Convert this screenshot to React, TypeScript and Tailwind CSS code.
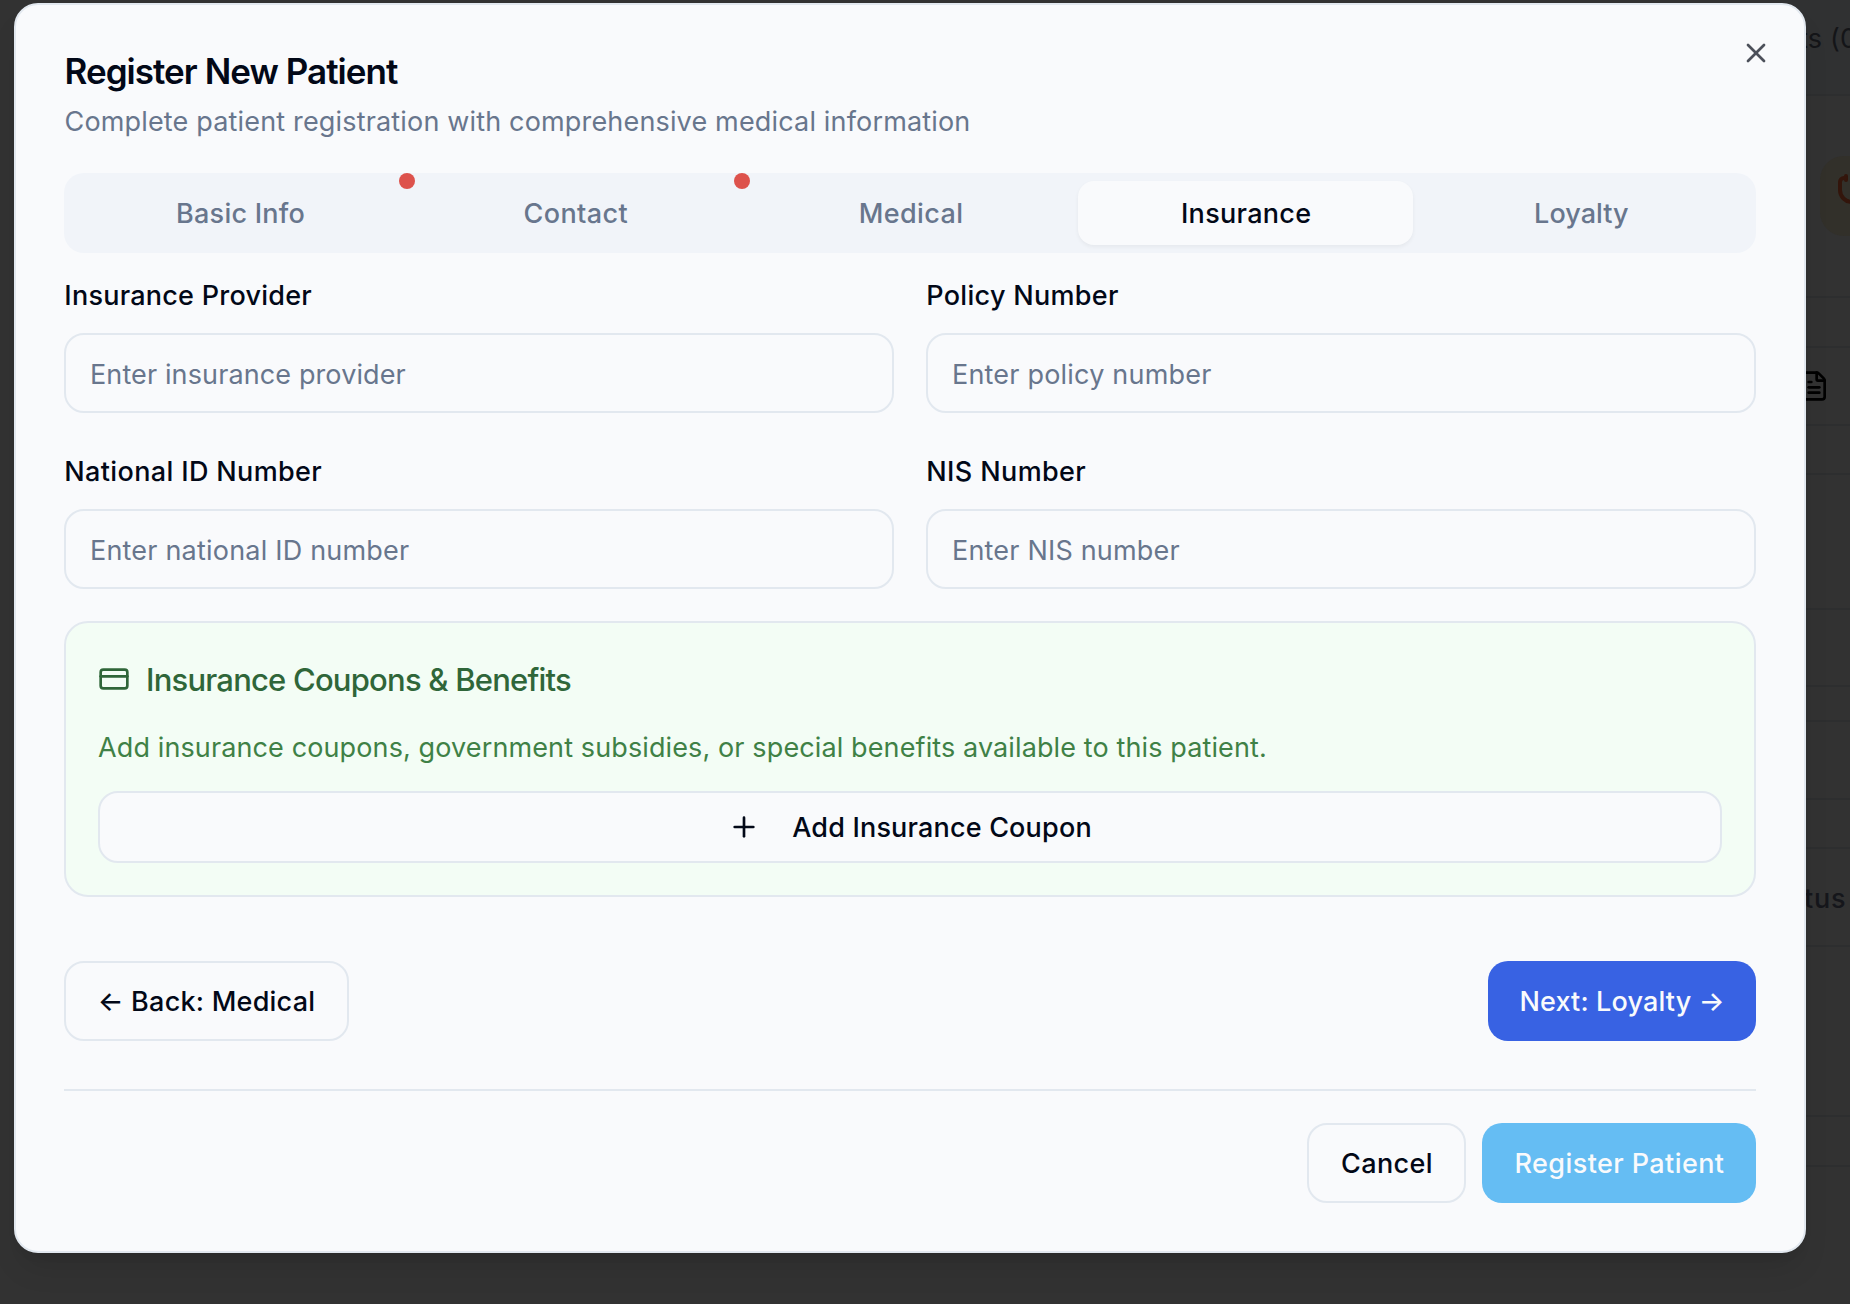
import React from 'react';
import { CreditCard, FileText, Plus, Stethoscope, X } from 'lucide-react';

const tabs = [
  { name: 'Basic Info', required: true, tracking: 'tracking-[0.244px]' },
  { name: 'Contact', required: true, tracking: 'tracking-[0.4px]' },
  { name: 'Medical', required: false, tracking: 'tracking-[0.388px]' },
  { name: 'Insurance', required: false, active: true, tracking: 'tracking-[0.305px]' },
  { name: 'Loyalty', required: false, tracking: 'tracking-[0.051px]' },
];

const fields = [
  { label: 'Insurance Provider', hint: 'Enter insurance provider', lt: 'tracking-[0.245px]', ht: 'tracking-[0.118px]' },
  { label: 'Policy Number', hint: 'Enter policy number', lt: 'tracking-[0.304px]', ht: 'tracking-[0.202px]' },
  { label: 'National ID Number', hint: 'Enter national ID number', lt: 'tracking-[0.361px]', ht: 'tracking-[0.202px]' },
  { label: 'NIS Number', hint: 'Enter NIS number', lt: 'tracking-[0.376px]', ht: 'tracking-[0.193px]' },
];

/* Dimmed page that shows past the right edge of the dialog */
function Backdrop() {
  const line = 'shrink-0 border-b-2 border-[#2d2e2f]';
  return (
    <div className="ml-[1780px] flex h-[1304px] w-[70px] flex-col overflow-hidden">
      <div className={`${line} flex h-[96px] items-start bg-[#303132] pt-[19px] pl-[19px]`}>
        <span className="text-[27px] leading-10 tracking-[0.2px] whitespace-nowrap text-[#141518]">ts (0</span>
      </div>
      <div className={`${line} flex h-[202px] items-start pt-[60px] pl-[40px]`}>
        <div className="flex size-20 shrink-0 items-center justify-center rounded-[24px] bg-[#32302a]">
          <Stethoscope className="size-12 text-[#33150b]" />
        </div>
      </div>
      <div className={`${line} h-[50px]`} />
      <div className={`${line} flex h-[78px] items-center pl-[18px]`}>
        <FileText className="size-8 text-black" />
      </div>
      <div className={`${line} h-[49px]`} />
      <div className={`${line} h-[135px]`} />
      <div className={`${line} h-[77px]`} />
      <div className={`${line} h-[35px]`} />
      <div className={`${line} h-[78px]`} />
      <div className={`${line} h-[49px]`} />
      <div className={`${line} flex h-[98px] items-start pt-[30px] pl-[24px]`}>
        <span className="text-[27px] leading-10 font-medium tracking-[0.8px] text-[#15161b]">tus</span>
      </div>
      <div className={`${line} h-[170px]`} />
      <div className={`${line} h-[50px]`} />
    </div>
  );
}

function Button({ className, icon, children }: { className: string; icon?: React.ReactNode; children: React.ReactNode }) {
  return (
    <button className={`flex items-center justify-center rounded-[20px] font-medium whitespace-nowrap ${className}`}>
      {icon}
      <span className="pt-0.5">{children}</span>
    </button>
  );
}

export default function App() {
  return (
    <div className="relative h-[1304px] w-[1850px] overflow-hidden bg-[#323232] font-['Inter',sans-serif] text-[27px] leading-10 text-[#020817]">
      <Backdrop />

      <div className="absolute top-[3px] left-[14px] flex h-[1250px] w-[1792px] flex-col rounded-[24px] border-2 border-[#e2e8ef] bg-[#f9fafc] p-12 shadow-[0_20px_30px_-6px_rgba(0,0,0,0.1),0_8px_12px_-8px_rgba(0,0,0,0.1)]">
        <button className="absolute top-8 right-8 text-[#4c505a]">
          <X className="size-8" />
        </button>

        <h2 className="pl-[0.5px] text-[35px] leading-9 font-semibold tracking-[-0.959px]">Register New Patient</h2>
        <p className="mt-[13px] pl-[0.5px] tracking-[0.165px] text-[#68768d]">
          Complete patient registration with comprehensive medical information
        </p>

        <div className="mt-[31px] grid h-20 grid-cols-5 rounded-[20px] bg-[#f1f4f9] p-2 font-medium text-[#68768d]">
          {tabs.map((t) => (
            <div
              key={t.name}
              className={`relative flex items-center justify-center rounded-[16px] pt-0.5 pl-0.5 ${t.tracking} ${
                t.active ? 'bg-[#f9fafc] text-[#020817] shadow-[0_2px_4px_rgba(0,0,0,0.05)]' : ''
              }`}
            >
              {t.name}
              {t.required && <span className="absolute -top-2 -right-2 size-4 rounded-full bg-[#dd524c]" />}
            </div>
          ))}
        </div>

        <div className="mt-[23px] grid grid-cols-2 gap-x-8 gap-y-[39px]">
          {fields.map((f) => (
            <label key={f.label} className="flex flex-col">
              <span className={`pl-[0.3px] font-medium ${f.lt}`}>{f.label}</span>
              <input
                placeholder={f.hint}
                className={`mt-[17px] h-20 w-full rounded-[20px] border-2 border-[#e2e8ef] bg-transparent px-6 pt-0.5 placeholder:text-[#68768d] ${f.ht}`}
              />
            </label>
          ))}
        </div>

        <section className="mt-8 flex flex-col rounded-[24px] border-2 border-[#e2e8ef] bg-[#f3fdf5] p-8">
          <h3 className="flex h-12 items-center gap-4 text-[31px] font-medium tracking-[-0.792px] text-[#2f6639]">
            <CreditCard className="size-8" />
            <span className="pt-0.5">Insurance Coupons &amp; Benefits</span>
          </h3>
          <p className="mt-[25px] tracking-[0.117px] text-[#3f8146]">
            Add insurance coupons, government subsidies, or special benefits available to this patient.
          </p>
          <Button
            className="mt-[23px] h-[72px] gap-8 border-2 border-[#e2e8ef] bg-[#f9fafc] tracking-[0.18px]"
            icon={<Plus className="size-8" />}
          >
            Add Insurance Coupon
          </Button>
        </section>

        <div className="mt-16 flex justify-between">
          <Button className="h-20 w-[285px] border-2 border-[#e2e8ef] tracking-[0.24px]">← Back: Medical</Button>
          <Button className="h-20 w-[268px] bg-[#3862e3] tracking-[0.15px] text-[#f9fafc]">Next: Loyalty →</Button>
        </div>

        <div className="mt-12 flex justify-end gap-4 border-t-2 border-[#e2e8ef] pt-8">
          <Button className="h-20 w-[159px] border-2 border-[#e2e8ef] pl-px tracking-[0.376px]">Cancel</Button>
          <Button className="h-20 w-[274px] bg-[#65bdf3] pl-px tracking-[0.41px] text-[#f9fafc]">Register Patient</Button>
        </div>
      </div>
    </div>
  );
}
